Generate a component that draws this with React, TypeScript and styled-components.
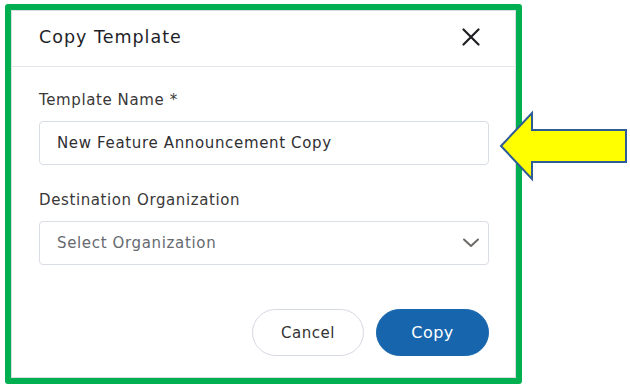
import React from "react";
import styled, { createGlobalStyle } from "styled-components";

const GlobalStyle = createGlobalStyle`
  body {
    margin: 0;
    background: #ffffff;
    font-family: "DejaVu Sans", "Liberation Sans", sans-serif;
  }
`;

const Page = styled.div`
  position: relative;
  width: 630px;
  height: 388px;
  padding: 4px 0 0 5px;
  box-sizing: border-box;
`;

const Frame = styled.div`
  width: 517px;
  height: 380px;
  border: 6px solid #00b050;
  border-radius: 3px;
  box-sizing: border-box;
  display: flex;
`;

const Dialog = styled.div`
  flex: 1;
  border: 1px solid #d9dde4;
  background: #ffffff;
  display: flex;
  flex-direction: column;
`;

const Header = styled.div`
  height: 56px;
  padding: 0 26px 0 27px;
  border-bottom: 1px solid #e3e6ec;
  box-sizing: border-box;
  display: flex;
  align-items: center;
  justify-content: space-between;
`;

const Title = styled.h2`
  margin: 0 0 3px;
  font-size: 17.5px;
  font-weight: 400;
  color: #1e1e28;
  letter-spacing: 1px;
`;

const CloseButton = styled.button`
  width: 20px;
  height: 20px;
  margin: 0 8px 3px 0;
  padding: 0;
  border: none;
  background: none;
  display: flex;
  align-items: center;
  justify-content: center;
`;

const Body = styled.div`
  padding: 23px 26px 0 27px;
  display: flex;
  flex-direction: column;
`;

const Label = styled.label<{ $top?: number }>`
  display: block;
  margin-top: ${(p) => p.$top || 0}px;
  margin-bottom: 11px;
  font-size: 15px;
  line-height: 20px;
  color: #3a3838;
  letter-spacing: 0.6px;
`;

const Field = styled.div`
  height: 44px;
  border: 1px solid #d9dde4;
  border-radius: 4px;
  box-sizing: border-box;
  padding: 0 8px 0 17px;
  display: flex;
  align-items: center;
  justify-content: space-between;
`;

const FieldText = styled.span<{ $placeholder?: boolean }>`
  font-size: 15px;
  letter-spacing: 0.65px;
  color: ${(p) => (p.$placeholder ? "#666a70" : "#2f2f33")};
`;

const Actions = styled.div`
  margin-top: 44px;
  display: flex;
  justify-content: flex-end;
  gap: 12px;
`;

const Button = styled.button<{ $primary?: boolean }>`
  width: ${(p) => (p.$primary ? 113 : 112)}px;
  height: 47px;
  border-radius: 24px;
  box-sizing: border-box;
  font-family: inherit;
  font-size: ${(p) => (p.$primary ? 16 : 15)}px;
  letter-spacing: 0.5px;
  border: 1px solid ${(p) => (p.$primary ? "#1766ad" : "#d5d9e0")};
  background: ${(p) => (p.$primary ? "#1766ad" : "#ffffff")};
  color: ${(p) => (p.$primary ? "#ffffff" : "#333333")};
`;

const Arrow = styled.svg`
  position: absolute;
  left: 496px;
  top: 108px;
`;

const App = () => {
  return (
    <Page>
      <GlobalStyle />
      <Frame>
        <Dialog>
          <Header>
            <Title>Copy Template</Title>
            <CloseButton>
              <svg width="18" height="18" viewBox="0 0 18 18">
                <path d="M1.5 1.5L16.5 16.5M16.5 1.5L1.5 16.5" stroke="#1f1f24" strokeWidth="2.2" strokeLinecap="round" />
              </svg>
            </CloseButton>
          </Header>
          <Body>
            <Label>Template Name *</Label>
            <Field>
              <FieldText>New Feature Announcement Copy</FieldText>
            </Field>
            <Label $top={25}>Destination Organization</Label>
            <Field>
              <FieldText $placeholder>Select Organization</FieldText>
              <svg width="18" height="10" viewBox="0 0 18 10">
                <path d="M2 1.5L9 8L16 1.5" fill="none" stroke="#6e6a68" strokeWidth="2" strokeLinecap="round" strokeLinejoin="round" />
              </svg>
            </Field>
            <Actions>
              <Button>Cancel</Button>
              <Button $primary>Copy</Button>
            </Actions>
          </Body>
        </Dialog>
      </Frame>
      <Arrow width="134" height="76" viewBox="496 108 134 76">
        <polygon
          points="501,146 532,113 532,130 626,130 626,162 532,162 532,179"
          fill="#ffff00"
          stroke="#2e5c96"
          strokeWidth="2"
          strokeLinejoin="miter"
        />
      </Arrow>
    </Page>
  );
};

export default App;
